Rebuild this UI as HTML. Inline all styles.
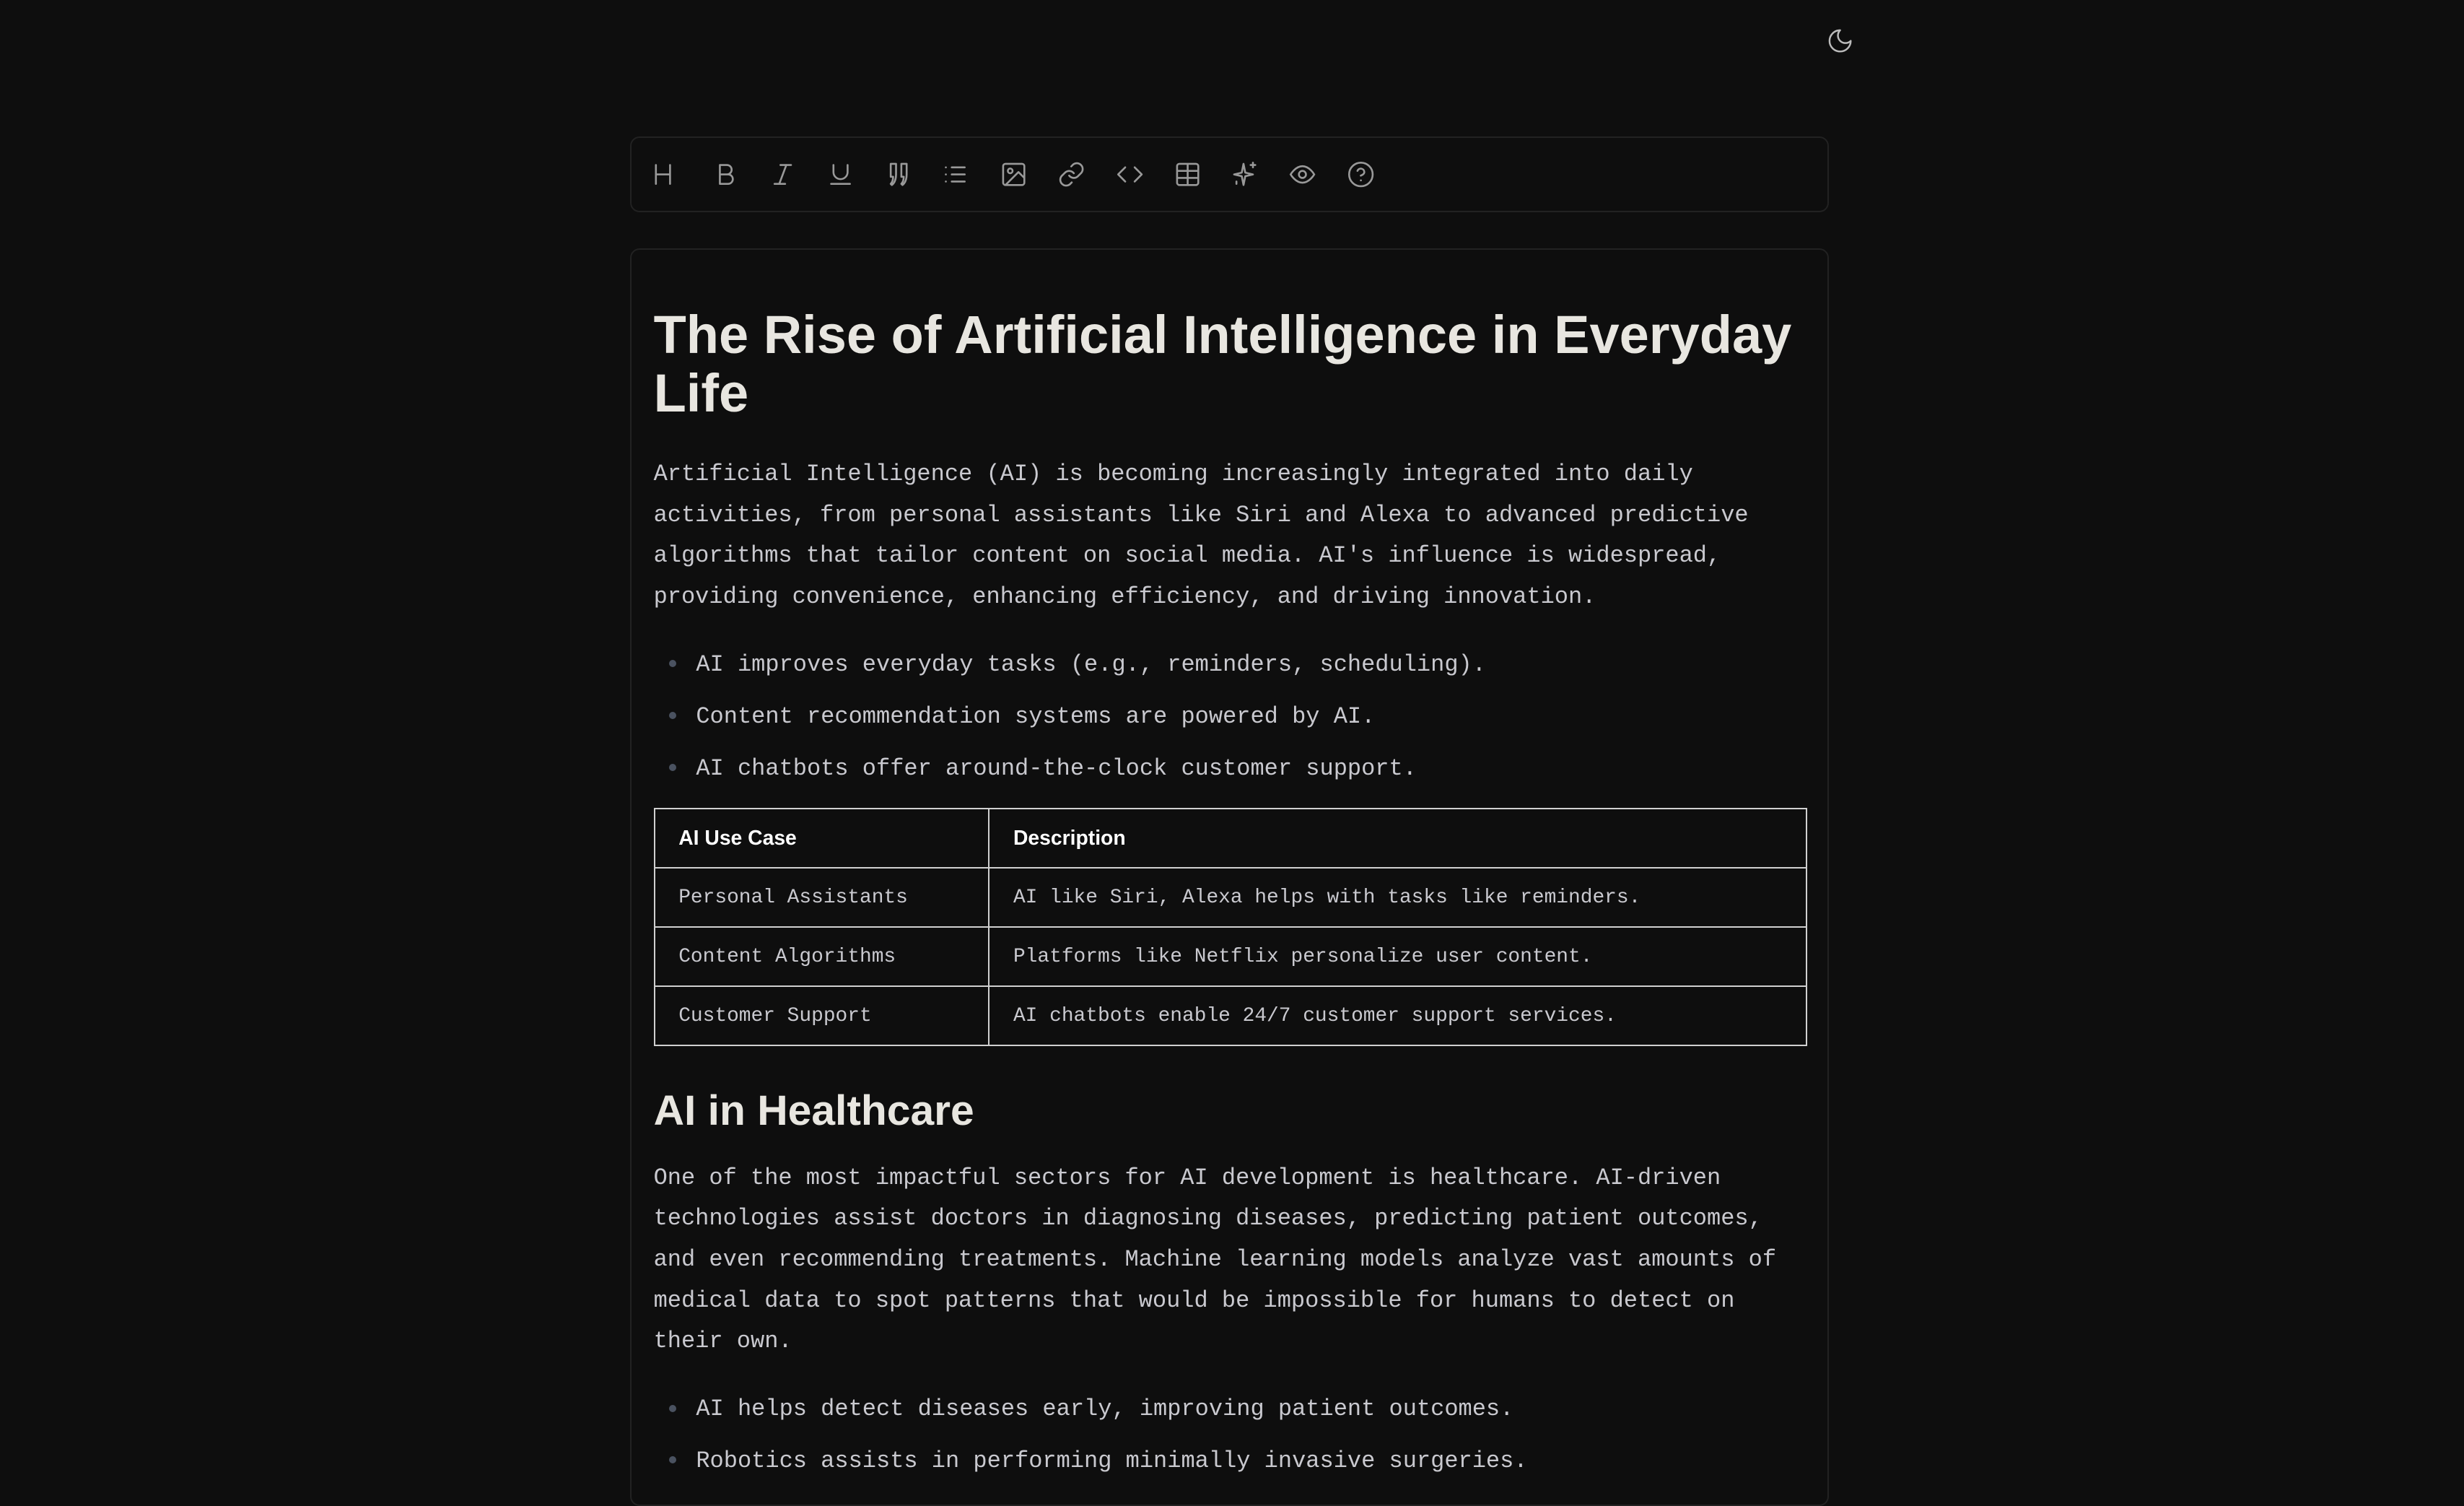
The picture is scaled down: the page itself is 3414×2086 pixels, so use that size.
<!DOCTYPE html>
<html><head><meta charset="utf-8"><style>
html{zoom:2.17730}
body{margin:0;background:#0e0e0e;width:1568px;height:941px;overflow:hidden;position:relative;font-family:"Liberation Mono",monospace;color:#c9c9cf}
.moon{position:absolute;left:1162px;top:17px}
.tb{position:absolute;left:401px;top:87px;width:763px;height:48px;border:1px solid #222;border-radius:6px;box-sizing:border-box}
.tb svg{position:absolute;top:14px}
.ed{position:absolute;left:401px;top:158px;width:763px;height:800px;border:1px solid #222;border-radius:6px;box-sizing:border-box}
.c{position:absolute;left:14px;top:0;width:734px}
h1{font-family:"Liberation Sans",sans-serif;font-weight:700;font-size:34px;line-height:37px;letter-spacing:0;color:#e8e6e0;margin:36px 0 0 0}
h2{font-family:"Liberation Sans",sans-serif;font-weight:700;font-size:27px;line-height:32px;letter-spacing:0;color:#e8e6e0;margin:25px 0 0 0}
p{font-size:14.7px;line-height:26px;margin:20px 0 0 0}
ul{margin:20px 0 0 0;padding:0 0 0 27px;font-size:14.7px;line-height:20px;list-style:none}
li{margin-bottom:13px;position:relative}
li::before{content:"";position:absolute;left:-17px;top:7px;width:4.6px;height:4.6px;border-radius:50%;background:#4a5260}
table{border-collapse:collapse;width:734px;margin-top:15px}
td,th{border:1px solid #d0d0d0;height:37.7px;padding:0 0 0 15px;text-align:left;font-size:12.8px;box-sizing:border-box}
th{font-family:"Liberation Sans",sans-serif;font-weight:700;color:#fff;font-size:13px}
</style></head><body>
<svg class="moon" width="18" height="18" viewBox="0 0 24 24" fill="none" stroke="#bbb" stroke-width="1.5" stroke-linecap="round" stroke-linejoin="round"><path d="M12 3a6 6 0 0 0 9 9 9 9 0 1 1-9-9z"/></svg>
<div class="tb">
<svg style="left:11px" width="18" height="18" viewBox="0 0 24 24" fill="none" stroke="#999" stroke-width="1.6" stroke-linecap="round"><path d="M6 4v16M18 4v16M6 12h12"/></svg>
<svg style="left:51px" width="18" height="18" viewBox="0 0 24 24" fill="none" stroke="#999" stroke-width="1.6" stroke-linejoin="round"><path d="M7 4h6a4 4 0 0 1 0 8H7zM7 12h7a4 4 0 0 1 0 8H7z"/></svg>
<svg style="left:87px" width="18" height="18" viewBox="0 0 24 24" fill="none" stroke="#999" stroke-width="1.6" stroke-linecap="round"><path d="M19 4h-9M14 20H5M15 4 9 20"/></svg>
<svg style="left:124px" width="18" height="18" viewBox="0 0 24 24" fill="none" stroke="#999" stroke-width="1.6" stroke-linecap="round"><path d="M6 4v6a6 6 0 0 0 12 0V4M4 20h16"/></svg>
<svg style="left:161px" width="18" height="18" viewBox="0 0 24 24" fill="none" stroke="#999" stroke-width="1.6" stroke-linejoin="round" stroke-linecap="round"><path d="M5 3h4.5v9c0 4-1 7-3.5 9l-1-1c1.5-1.5 2-4 2-6H5zM14 3h4.5v9c0 4-1 7-3.5 9l-1-1c1.5-1.5 2-4 2-6H14z"/></svg>
<svg style="left:197px" width="18" height="18" viewBox="0 0 24 24" fill="none" stroke="#999" stroke-width="1.6" stroke-linecap="round"><path d="M9 6h11M9 12h11M9 18h11M4 6h.01M4 12h.01M4 18h.01"/></svg>
<svg style="left:234px" width="18" height="18" viewBox="0 0 24 24" fill="none" stroke="#999" stroke-width="1.6" stroke-linejoin="round"><rect x="3" y="3" width="18" height="18" rx="2"/><circle cx="9" cy="9" r="2"/><path d="m21 15-5-5L5 21"/></svg>
<svg style="left:271px" width="18" height="18" viewBox="0 0 24 24" fill="none" stroke="#999" stroke-width="1.6" stroke-linecap="round"><path d="M10 13a5 5 0 0 0 7.5.5l3-3a5 5 0 0 0-7-7l-1.7 1.7M14 11a5 5 0 0 0-7.5-.5l-3 3a5 5 0 0 0 7 7l1.7-1.7"/></svg>
<svg style="left:308px" width="18" height="18" viewBox="0 0 24 24" fill="none" stroke="#999" stroke-width="1.6" stroke-linecap="round" stroke-linejoin="round"><path d="m8 6-6 6 6 6M16 6l6 6-6 6"/></svg>
<svg style="left:345px" width="18" height="18" viewBox="0 0 24 24" fill="none" stroke="#999" stroke-width="1.6"><rect x="3" y="3" width="18" height="18" rx="2"/><path d="M3 9h18M3 15h18M12 3v18"/></svg>
<svg style="left:381px" width="18" height="18" viewBox="0 0 24 24" fill="none" stroke="#999" stroke-width="1.6" stroke-linejoin="round" stroke-linecap="round"><path d="M11 3 9.5 10.5 3 12l6.5 1.5L11 21l1.5-7.5L19 12l-6.5-1.5zM19 2v4M17 4h4M5 18v2"/></svg>
<svg style="left:418px" width="18" height="18" viewBox="0 0 24 24" fill="none" stroke="#999" stroke-width="1.6"><path d="M2 12s4-7 10-7 10 7 10 7-4 7-10 7S2 12 2 12z"/><circle cx="12" cy="12" r="3"/></svg>
<svg style="left:455px" width="18" height="18" viewBox="0 0 24 24" fill="none" stroke="#999" stroke-width="1.6" stroke-linecap="round"><circle cx="12" cy="12" r="10"/><path d="M9.1 9a3 3 0 0 1 5.8 1c0 2-3 3-3 3M12 17h.01"/></svg>
</div>
<div class="ed"><div class="c">
<h1>The Rise of Artificial Intelligence in Everyday<br>Life</h1>
<p>Artificial Intelligence (AI) is becoming increasingly integrated into daily activities, from personal assistants like Siri and Alexa to advanced predictive algorithms that tailor content on social media. AI's influence is widespread, providing convenience, enhancing efficiency, and driving innovation.</p>
<ul><li>AI improves everyday tasks (e.g., reminders, scheduling).</li><li>Content recommendation systems are powered by AI.</li><li>AI chatbots offer around-the-clock customer support.</li></ul>
<table><tr><th style="width:213px">AI Use Case</th><th>Description</th></tr>
<tr><td>Personal Assistants</td><td>AI like Siri, Alexa helps with tasks like reminders.</td></tr>
<tr><td>Content Algorithms</td><td>Platforms like Netflix personalize user content.</td></tr>
<tr><td>Customer Support</td><td>AI chatbots enable 24/7 customer support services.</td></tr></table>
<h2>AI in Healthcare</h2>
<p style="margin-top:14px">One of the most impactful sectors for AI development is healthcare. AI-driven technologies assist doctors in diagnosing diseases, predicting patient outcomes, and even recommending treatments. Machine learning models analyze vast amounts of medical data to spot patterns that would be impossible for humans to detect on their own.</p>
<ul><li>AI helps detect diseases early, improving patient outcomes.</li><li>Robotics assists in performing minimally invasive surgeries.</li></ul>
</div></div>
</body></html>
